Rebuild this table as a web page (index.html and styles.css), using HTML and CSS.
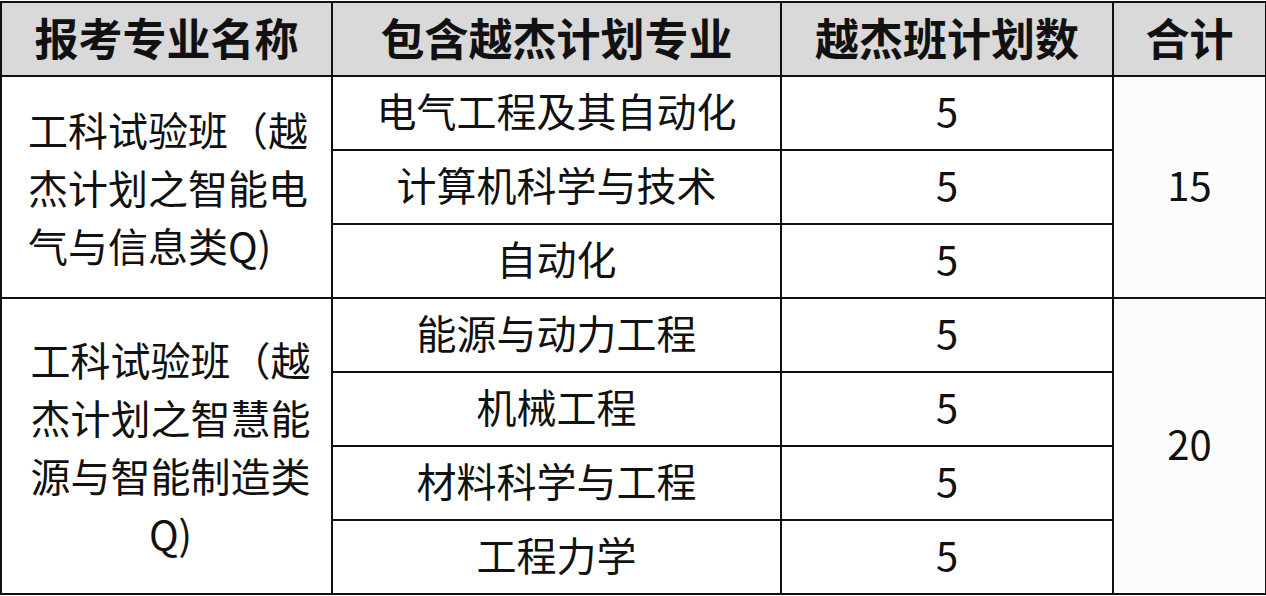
FILE: index.html
```html
<!DOCTYPE html>
<html lang="zh-CN">
<head>
<meta charset="utf-8">
<title>越杰计划专业</title>
<link rel="stylesheet" href="styles.css">
</head>
<body>
<table class="plan">
  <colgroup>
    <col class="c1">
    <col class="c2">
    <col class="c3">
    <col class="c4">
  </colgroup>
  <thead>
    <tr>
      <th>报考专业名称</th>
      <th>包含越杰计划专业</th>
      <th>越杰班计划数</th>
      <th>合计</th>
    </tr>
  </thead>
  <tbody>
    <tr>
      <td rowspan="3" class="group group-left">工科试验班（越杰计划之智能电气与信息类Q)</td>
      <td>电气工程及其自动化</td>
      <td class="num">5</td>
      <td rowspan="3" class="num total">15</td>
    </tr>
    <tr>
      <td>计算机科学与技术</td>
      <td class="num">5</td>
    </tr>
    <tr>
      <td>自动化</td>
      <td class="num">5</td>
    </tr>
    <tr>
      <td rowspan="4" class="group">工科试验班（越杰计划之智慧能源与智能制造类Q)</td>
      <td>能源与动力工程</td>
      <td class="num">5</td>
      <td rowspan="4" class="num total">20</td>
    </tr>
    <tr>
      <td>机械工程</td>
      <td class="num">5</td>
    </tr>
    <tr>
      <td>材料科学与工程</td>
      <td class="num">5</td>
    </tr>
    <tr>
      <td>工程力学</td>
      <td class="num">5</td>
    </tr>
  </tbody>
</table>
</body>
</html>
```

FILE: styles.css
```css
html, body {
  margin: 0;
  padding: 0;
  background: #ffffff;
}

body {
  font-family: "Noto Sans CJK SC", "Noto Sans", sans-serif;
  color: #111111;
  padding-top: 1px;
}

.plan {
  border-collapse: collapse;
  table-layout: fixed;
  width: 1265px;
}

.c1 { width: 331px; }
.c2 { width: 449px; }
.c3 { width: 332px; }
.c4 { width: 153px; }

.plan th,
.plan td {
  border: 2px solid #111111;
  padding: 0 0 6px 0;
  text-align: center;
  vertical-align: middle;
  height: 66px;
}

.plan th {
  background: #d9d9d9;
  font-size: 44px;
  font-weight: 700;
  line-height: 1;
  color: #111111;
  padding-bottom: 5px;
  height: 67px;
}

.plan td {
  font-size: 40px;
  font-weight: 400;
  line-height: 1;
  background: #ffffff;
}

.plan td.group {
  padding: 0 18px 0 26px;
  line-height: 58px;
  text-align: center;
}

.plan td.group-left {
  text-align: left;
}

.plan td.num {
  font-size: 40px;
}

.plan td.total {
  background: #fdfcfd;
}
```
